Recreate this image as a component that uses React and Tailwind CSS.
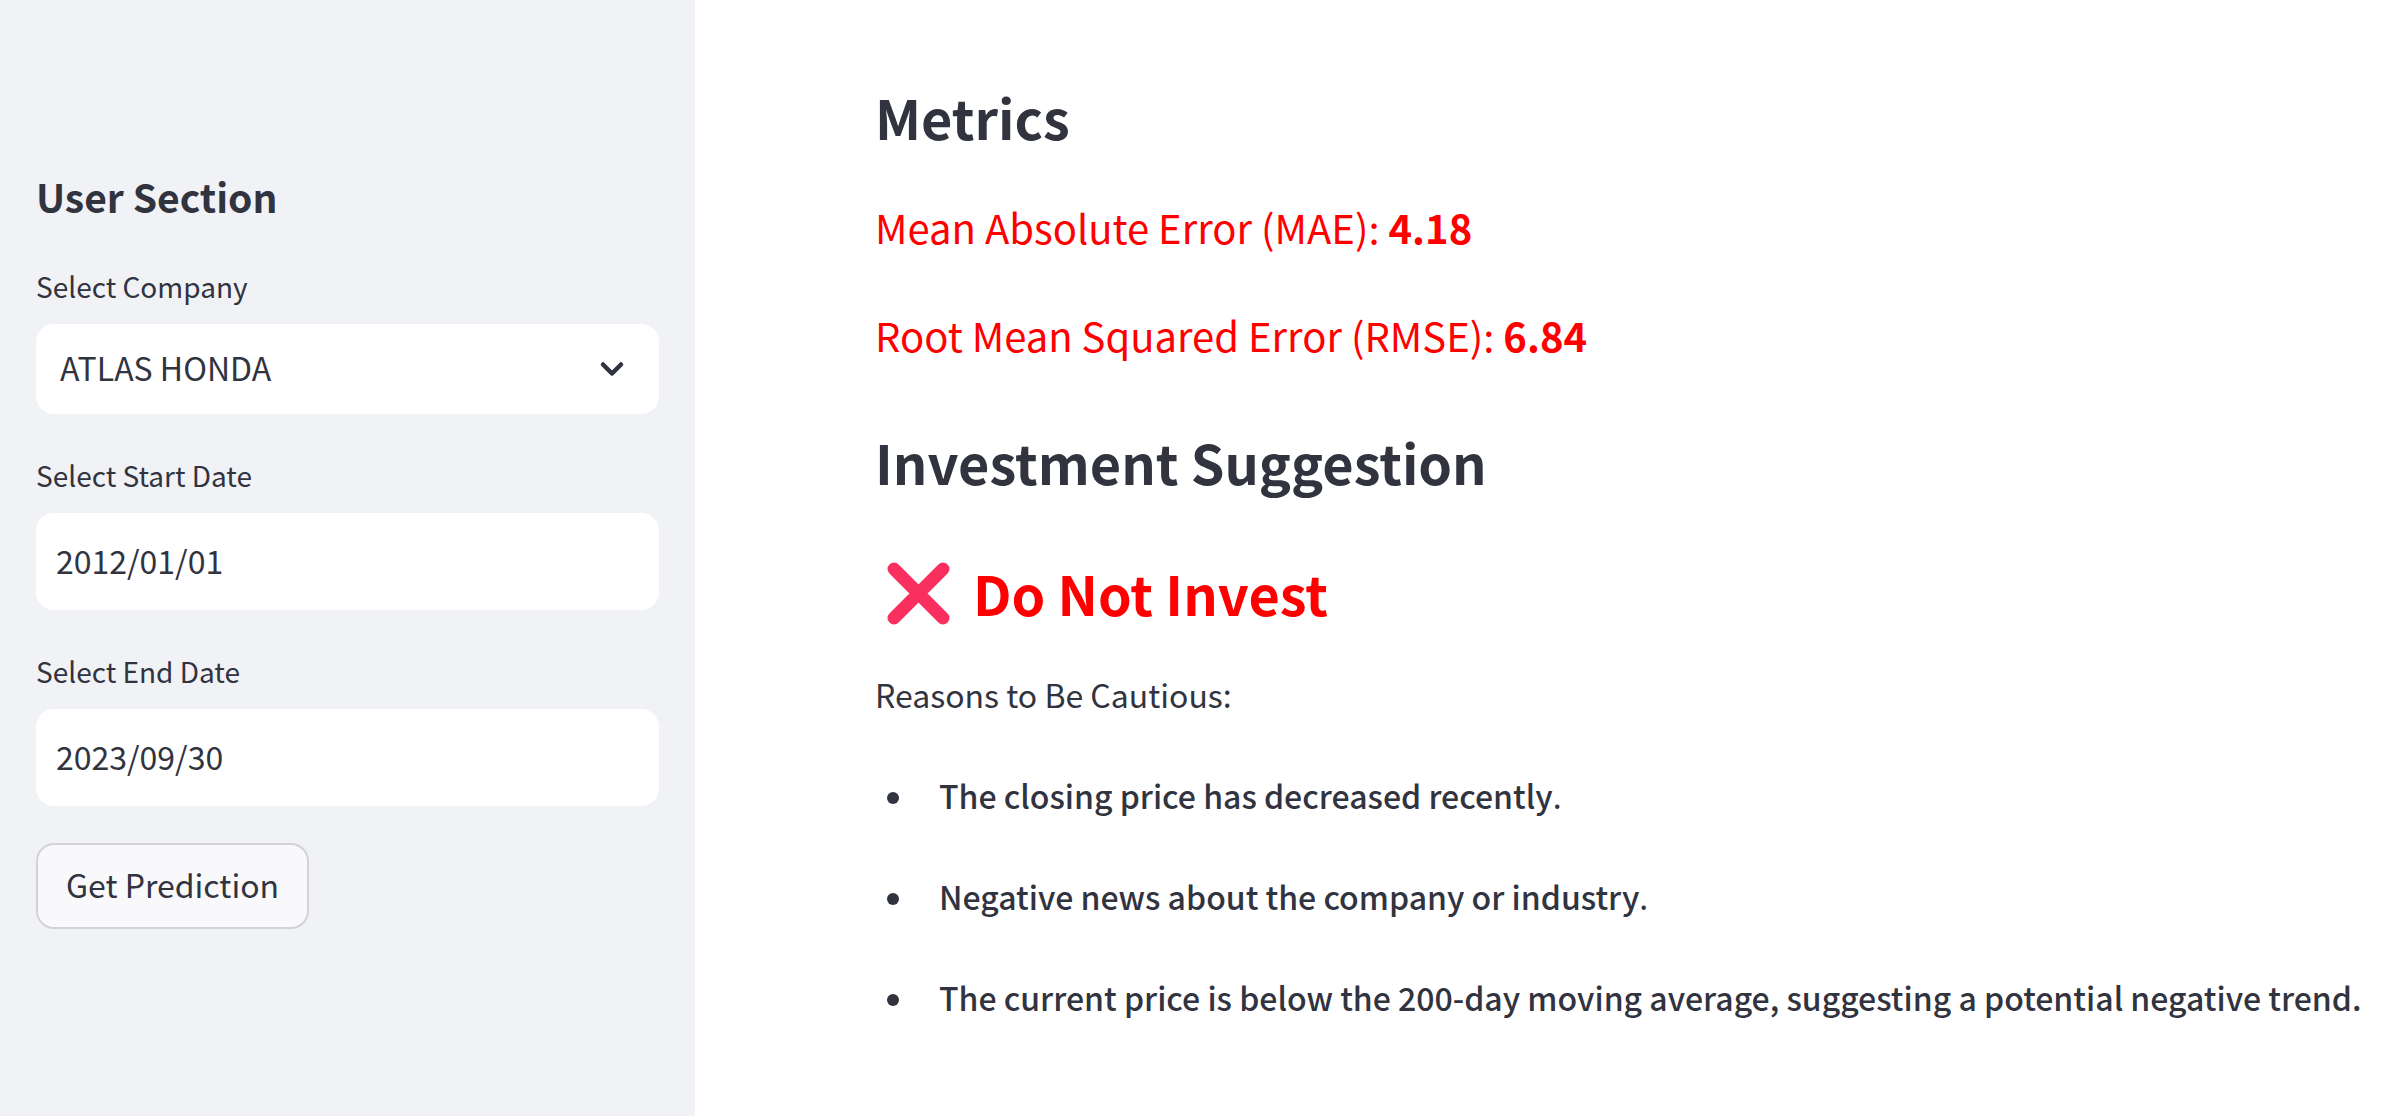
import React from "react";
import { ChevronDown } from "lucide-react";

const controlClass =
  "w-full rounded-[18px] border-0 bg-white pb-1 text-[32px] leading-[48px] outline-none";

function Field({ id, label, children }) {
  return (
    <div className="flex flex-col">
      <label htmlFor={id} className="pb-[14px] text-[28px] leading-[48px]">
        {label}
      </label>
      {children}
    </div>
  );
}

function DateField({ id, label, value }) {
  return (
    <Field id={id} label={label}>
      <input id={id} type="text" defaultValue={value} className={`${controlClass} h-[97px] px-5`} />
    </Field>
  );
}

function CrossMark() {
  return (
    <svg viewBox="0 0 64 64" className="size-16 shrink-0" aria-hidden="true">
      <path d="M7 8 56 57M56 8 7 57" fill="none" stroke="#f92f60" strokeWidth="13" strokeLinecap="round" />
    </svg>
  );
}

const reasons = [
  ["The closing price has decreased recently", "."],
  ["Negative news about the company or industry", "."],
  ["The current price is below the 200-day moving average, suggesting a potential negative trend.", ""],
];

export default function App() {
  return (
    <div className="flex min-h-screen bg-white font-['Noto_Sans_CJK_SC',sans-serif] text-[#31333f]">
      <aside className="w-[695px] shrink-0 bg-[#f0f2f6] px-9 pt-[170px]">
        <h2 className="text-[39px] leading-[52px] font-bold">User Section</h2>
        <form className="mt-10 flex flex-col gap-[37px]" onSubmit={(e) => e.preventDefault()}>
          <Field id="company" label="Select Company">
            <div className="relative">
              <select id="company" className={`${controlClass} block h-[90px] appearance-none px-6`}>
                <option>ATLAS HONDA</option>
              </select>
              <ChevronDown
                className="pointer-events-none absolute top-[27px] right-[29px] size-9"
                strokeWidth={3}
                aria-hidden="true"
              />
            </div>
          </Field>
          <DateField id="start" label="Select Start Date" value="2012/01/01" />
          <DateField id="end" label="Select End Date" value="2023/09/30" />
          <button
            type="submit"
            className="h-[86px] self-start rounded-[18px] border-2 border-[#d2d3d8] bg-[#f9f9fb] px-7 pb-1 text-[32px] leading-[48px]"
          >
            Get Prediction
          </button>
        </form>
      </aside>

      <main className="grow pt-[83px] pl-[180px]">
        <h2 className="text-[54px] leading-[68px] font-bold">Metrics</h2>
        <div className="mt-[46px] flex flex-col gap-12 text-[40px] leading-[60px] text-[#ff0000]">
          <p>
            Mean Absolute Error (MAE): <strong className="font-bold">4.18</strong>
          </p>
          <p>
            Root Mean Squared Error (RMSE): <strong className="font-bold">6.84</strong>
          </p>
        </div>
        <h2 className="mt-[63px] text-[54px] leading-[68px] font-bold">Investment Suggestion</h2>
        <h2 className="mt-[63px] flex items-center gap-[22px] text-[54px] leading-[68px] font-bold text-[#ff0000]">
          <span className="pl-3">
            <CrossMark />
          </span>
          Do Not Invest
        </h2>
        <p className="mt-[41px] text-[32px] leading-[53px]">Reasons to Be Cautious:</p>
        <ul className="mt-12 flex flex-col gap-12 text-[32px] leading-[53px]">
          {reasons.map(([text, end]) => (
            <li key={text} className="flex items-center gap-10 pl-3">
              <span className="mt-1 size-3 shrink-0 rounded-full bg-[#31333f]" />
              <span>
                <strong className="font-medium">{text}</strong>
                {end}
              </span>
            </li>
          ))}
        </ul>
      </main>
    </div>
  );
}
